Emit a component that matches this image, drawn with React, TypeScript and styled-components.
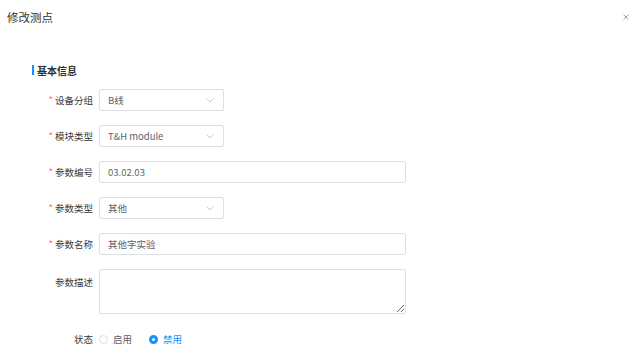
import React from 'react';
import styled, { createGlobalStyle } from 'styled-components';

const GlobalStyle = createGlobalStyle`
  html, body {
    margin: 0;
    padding: 0;
    background: #fff;
    font-family: "Noto Sans CJK SC", "Liberation Sans", sans-serif;
  }
`;

const Dialog = styled.div`
  width: 640px;
  height: 354px;
  background: #fff;
  overflow: hidden;
`;

const Header = styled.div`
  height: 34px;
  display: flex;
  align-items: center;
  justify-content: space-between;
  padding: 0 10px 0 7px;
`;

const Title = styled.span`
  font-size: 11.5px;
  color: #303133;
`;

const Close = styled.span`
  display: flex;
  align-items: center;
  justify-content: center;
  width: 8px;
  height: 8px;
`;

const Body = styled.div`
  padding: 28px 0 0 32px;
`;

const SectionTitle = styled.div`
  display: flex;
  align-items: center;
  gap: 3px;
  height: 16px;
  font-size: 10px;
  font-weight: 700;
  color: #303133;

  &::before {
    content: '';
    width: 2px;
    height: 10px;
    background: #1890ff;
  }
`;

const Form = styled.div`
  margin-top: 11px;
  display: flex;
  flex-direction: column;
  gap: 14px;
`;

const Row = styled.div<{ $top?: boolean }>`
  display: flex;
  align-items: ${p => (p.$top ? 'flex-start' : 'center')};
  gap: 6px;
`;

const Label = styled.label<{ $required?: boolean; $top?: boolean }>`
  width: 61px;
  text-align: right;
  font-size: 9.5px;
  color: #3a3a3a;
  line-height: 22px;
  flex-shrink: 0;
  padding-top: ${p => (p.$top ? '2px' : '0')};

  &::before {
    content: ${p => (p.$required ? "'*'" : 'none')};
    color: #f56c6c;
    margin-right: 2px;
  }
`;

const Box = styled.div<{ $width: number }>`
  width: ${p => p.$width}px;
  height: 22px;
  box-sizing: border-box;
  border: 1px solid #dcdfe6;
  border-radius: 2px;
  display: flex;
  align-items: center;
  justify-content: space-between;
  padding: 0 9px 0 8px;
  font-size: 9.5px;
  color: #606266;
`;

const TextArea = styled.textarea`
  width: 307px;
  height: 45px;
  box-sizing: border-box;
  border: 1px solid #dcdfe6;
  border-radius: 2px;
  font-family: inherit;
  margin: 0;
  display: block;
`;

const RadioGroup = styled.div`
  display: flex;
  align-items: center;
  gap: 17px;
  height: 22px;
`;

const RadioItem = styled.span<{ $checked?: boolean }>`
  display: flex;
  align-items: center;
  gap: 5px;
  font-size: 9.5px;
  color: ${p => (p.$checked ? '#1890ff' : '#606266')};
`;

const RadioDot = styled.span<{ $checked?: boolean }>`
  width: 9px;
  height: 9px;
  box-sizing: border-box;
  border-radius: 50%;
  border: ${p => (p.$checked ? '3px solid #1890ff' : '1px solid #dcdfe6')};
  background: #fff;
`;

const Chevron = () => (
  <svg width="8" height="5" viewBox="0 0 8 5">
    <polyline points="0.5,0.5 4,4 7.5,0.5" fill="none" stroke="#c0c4cc" strokeWidth="0.9" />
  </svg>
);

const Select: React.FC<{ value: string }> = ({ value }) => (
  <Box $width={125}>
    <span>{value}</span>
    <Chevron />
  </Box>
);

export default function App() {
  return (
    <Dialog>
      <GlobalStyle />
      <Header>
        <Title>修改测点</Title>
        <Close>
          <svg width="6" height="6" viewBox="0 0 6 6">
            <path d="M0.5 0.5L5.5 5.5M5.5 0.5L0.5 5.5" stroke="#909399" strokeWidth="0.9" />
          </svg>
        </Close>
      </Header>
      <Body>
        <SectionTitle>基本信息</SectionTitle>
        <Form>
          <Row>
            <Label $required>设备分组</Label>
            <Select value="B线" />
          </Row>
          <Row>
            <Label $required>模块类型</Label>
            <Select value="T&H module" />
          </Row>
          <Row>
            <Label $required>参数编号</Label>
            <Box $width={307}>03.02.03</Box>
          </Row>
          <Row>
            <Label $required>参数类型</Label>
            <Select value="其他" />
          </Row>
          <Row>
            <Label $required>参数名称</Label>
            <Box $width={307}>其他字实验</Box>
          </Row>
          <Row $top>
            <Label $top>参数描述</Label>
            <TextArea />
          </Row>
          <Row>
            <Label>状态</Label>
            <RadioGroup>
              <RadioItem>
                <RadioDot />
                启用
              </RadioItem>
              <RadioItem $checked>
                <RadioDot $checked />
                禁用
              </RadioItem>
            </RadioGroup>
          </Row>
        </Form>
      </Body>
    </Dialog>
  );
}
